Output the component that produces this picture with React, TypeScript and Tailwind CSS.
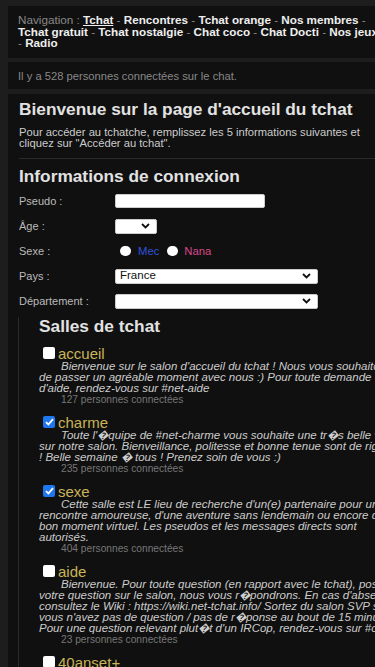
import React from "react";

const navLinks = [
  "Rencontres",
  "Tchat orange",
  "Nos membres",
  "Tchat gratuit",
  "Tchat nostalgie",
  "Chat coco",
  "Chat Docti",
  "Nos jeux",
  "Radio",
];

const rooms = [
  {
    name: "accueil",
    checked: false,
    desc: "Bienvenue sur le salon d'accueil du tchat ! Nous vous souhaitons de passer un agréable moment avec nous :) Pour toute demande d'aide, rendez-vous sur #net-aide",
    count: 127,
  },
  {
    name: "charme",
    checked: true,
    desc: "Toute l'\uFFFDquipe de #net-charme vous souhaite une tr\uFFFDs belle visite sur notre salon. Bienveillance, politesse et bonne tenue sont de rigueur ! Belle semaine \uFFFD tous ! Prenez soin de vous :)",
    count: 235,
  },
  {
    name: "sexe",
    checked: true,
    desc: "Cette salle est LE lieu de recherche d'un(e) partenaire pour une rencontre amoureuse, d'une aventure sans lendemain ou encore d'un bon moment virtuel. Les pseudos et les messages directs sont autorisés.",
    count: 404,
  },
  {
    name: "aide",
    checked: false,
    desc: "Bienvenue. Pour toute question (en rapport avec le tchat), posez votre question sur le salon, nous vous r\uFFFDpondrons. En cas d'absence, consultez le Wiki : https://wiki.net-tchat.info/ Sortez du salon SVP si vous n'avez pas de question / pas de r\uFFFDponse au bout de 15 minutes. Pour une question relevant plut\uFFFDt d'un IRCop, rendez-vous sur #opers",
    count: 23,
  },
  {
    name: "40anset+",
    checked: false,
    desc: "Salon réservé aux personnes de 40 ans et plus. Venez discuter dans la bonne humeur et le respect de chacun.",
    count: 58,
  },
];

function Chevron() {
  return (
    <svg width="9" height="6" viewBox="0 0 9 6">
      <path d="M1 1l3.5 3.5L8 1" stroke="#111" strokeWidth="1.8" fill="none" />
    </svg>
  );
}

function Select({ width, value }: { width: string; value?: string }) {
  return (
    <div
      className={`${width} h-[15px] bg-white rounded-[2px] border border-[#ccc] flex items-center justify-between pl-[4px] pr-[6px]`}
    >
      <span className="text-[11.5px] leading-none text-[#111]">{value}</span>
      <Chevron />
    </div>
  );
}

function Checkbox({ checked }: { checked: boolean }) {
  if (checked) {
    return (
      <span className="w-[12px] h-[12px] rounded-[2px] bg-[#1f77f0] flex items-center justify-center">
        <svg width="9" height="8" viewBox="0 0 9 8">
          <path d="M1 4.2l2.4 2.3L8 1.2" stroke="#fff" strokeWidth="1.8" fill="none" />
        </svg>
      </span>
    );
  }
  return <span className="w-[12px] h-[12px] rounded-[2px] bg-white" />;
}

function Row({ label, children }: { label: string; children: React.ReactNode }) {
  return (
    <div className="flex items-center h-[25px]">
      <span className="w-[96px] text-[11px] text-[#bbb]">{label}</span>
      {children}
    </div>
  );
}

export default function App() {
  return (
    <div className="w-full min-h-screen overflow-hidden bg-[#1d1d1d] font-['Liberation_Sans',Arial,sans-serif]">
      <div className="w-[420px] pt-[6px] pl-[8px] flex flex-col">
        {/* navigation */}
        <div className="bg-[#101010] pl-[10px] pr-[22px] pt-[8px] pb-[9px] w-[394px]">
          <p className="text-[11.7px] leading-[11.5px] text-[#888]">
            Navigation :{" "}
            <span className="font-bold text-[#eee] underline">Tchat</span>
            {navLinks.map((l) => (
              <React.Fragment key={l}>
                {" "}- <span className="font-bold text-[#eee]">{l}</span>
              </React.Fragment>
            ))}
          </p>
        </div>

        <div className="mt-[4px] bg-[#101010] px-[10px] pt-[8px] pb-[7px]">
          <p className="text-[11.2px] leading-[12px] text-[#888]">
            Il y a 528 personnes connectées sur le chat.
          </p>
        </div>

        <div className="mt-[5px] bg-[#101010] pl-[11px] pt-[5px] pb-[20px]">
          <h1 className="text-[17.3px] leading-[20px] font-bold text-[#e2e2e2]">
            Bienvenue sur la page d'accueil du tchat
          </h1>
          <p className="mt-[8px] w-[356px] text-[11.2px] leading-[11px] text-[#ccc]">
            Pour accéder au tchatche, remplissez les 5 informations suivantes et
            cliquez sur "Accéder au tchat".
          </p>
          <div className="mt-[9px] border-t border-[#2a2a2a]" />
          <h2 className="mt-[7px] text-[17.3px] leading-[20px] font-bold text-[#e2e2e2]">
            Informations de connexion
          </h2>

          <div className="mt-[3px]">
            <Row label="Pseudo :">
              <div className="w-[150px] h-[14px] bg-white rounded-[2px] border border-[#ccc]" />
            </Row>
            <Row label="Âge :">
              <Select width="w-[42px]" />
            </Row>
            <Row label="Sexe :">
              <div className="flex items-center pl-[5px] text-[11.3px]">
                <span className="w-[11px] h-[10px] rounded-full bg-white" />
                <span className="ml-[7px] text-[#3352dc]">Mec</span>
                <span className="ml-[8px] w-[11px] h-[10px] rounded-full bg-white" />
                <span className="ml-[6px] text-[#d8478c]">Nana</span>
              </div>
            </Row>
            <Row label="Pays :">
              <Select width="w-[203px]" value="France" />
            </Row>
            <Row label="Département :">
              <Select width="w-[203px]" />
            </Row>
          </div>

          <div className="mt-[3px] -ml-[1px] border-l border-[#2a2a2a] pl-[20px]">
            <h3 className="text-[17.3px] leading-[18px] font-bold text-[#e2e2e2]">
              Salles de tchat
            </h3>
            <div className="mt-[11px] flex flex-col gap-[10px] w-[365px]">
              {rooms.map((r) => (
                <div key={r.name}>
                  <div className="flex items-center h-[15px] pl-[4px]">
                    <Checkbox checked={r.checked} />
                    <span className="ml-[3px] text-[15px] leading-[15px] text-[#c9b458]">
                      {r.name}
                    </span>
                  </div>
                  <p className="italic indent-[22px] text-[11.5px] leading-[11px] text-[#ccc]">
                    {r.desc}
                  </p>
                  <p className="pl-[22px] text-[10.2px] leading-[11px] text-[#777]">
                    {r.count} personnes connectées
                  </p>
                </div>
              ))}
            </div>
          </div>
        </div>
      </div>
    </div>
  );
}
